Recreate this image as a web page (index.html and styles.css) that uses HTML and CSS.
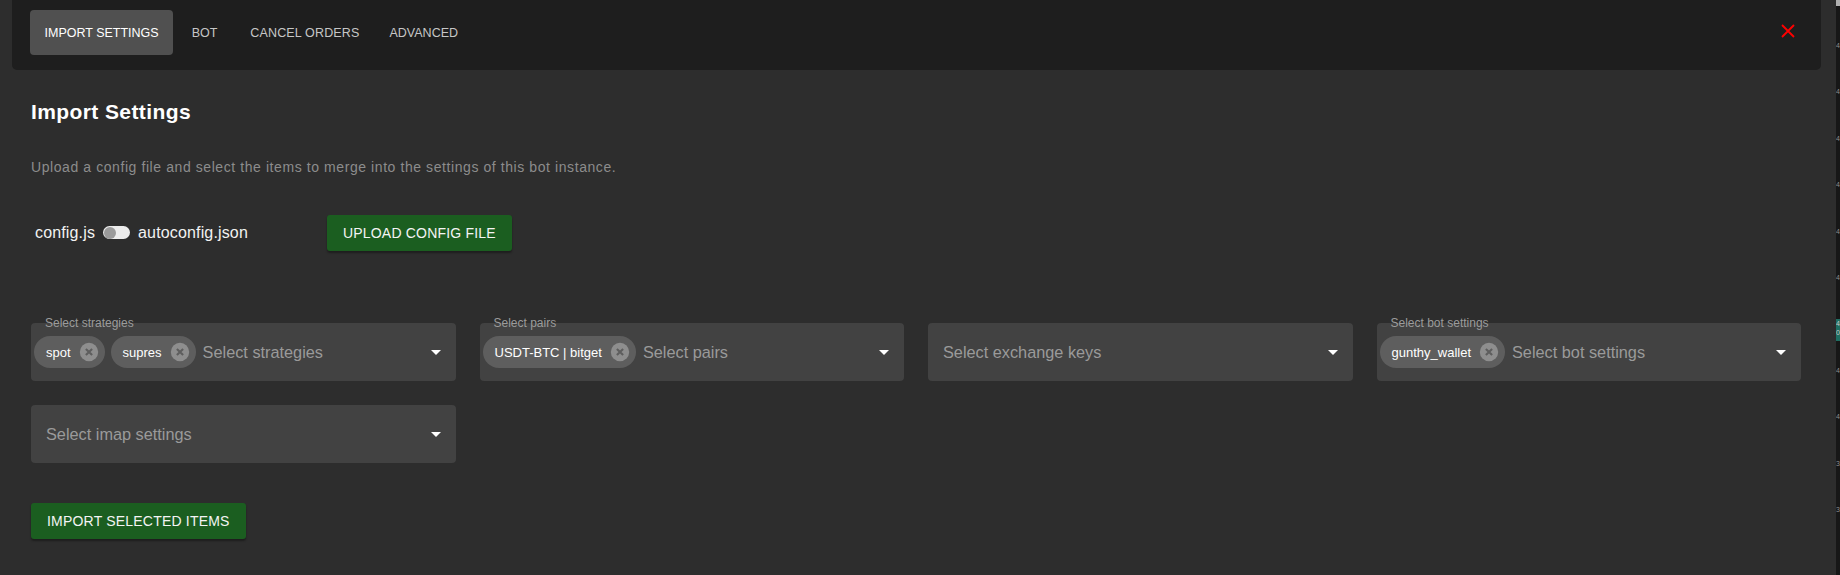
FILE: index.html
```html
<!DOCTYPE html>
<html lang="en">
<head>
<meta charset="utf-8">
<title>Import Settings</title>
<link rel="stylesheet" href="styles.css">
</head>
<body>
<div class="screen">
  <div class="dialog">
    <header class="topbar">
      <nav class="tabs">
        <div class="tab active">IMPORT SETTINGS</div>
        <div class="tab">BOT</div>
        <div class="tab wide">CANCEL ORDERS</div>
        <div class="tab last">ADVANCED</div>
      </nav>
      <button class="close" aria-label="Close">
        <svg width="14" height="14" viewBox="0 0 14 14"><path d="M1 1L13 13M13 1L1 13" stroke="#ff0000" stroke-width="1.8" fill="none"/></svg>
      </button>
    </header>
    <main class="content">
      <h2 class="title">Import Settings</h2>
      <p class="desc">Upload a config file and select the items to merge into the settings of this bot instance.</p>
      <div class="file-row">
        <div class="switch-group">
          <span class="switch-text">config.js</span>
          <span class="switch"><span class="thumb"></span></span>
          <span class="switch-text">autoconfig.json</span>
        </div>
        <button class="btn upload">UPLOAD CONFIG FILE</button>
      </div>
      <div class="selects">
        <div class="field chips">
          <span class="field-label">Select strategies</span>
          <span class="chip">spot<svg class="chip-x" viewBox="0 0 24 24"><circle cx="12" cy="12" r="10"/><path d="M8.6 8.6L15.4 15.4M15.4 8.6L8.6 15.4"/></svg></span>
          <span class="chip">supres<svg class="chip-x" viewBox="0 0 24 24"><circle cx="12" cy="12" r="10"/><path d="M8.6 8.6L15.4 15.4M15.4 8.6L8.6 15.4"/></svg></span>
          <span class="placeholder">Select strategies</span>
          <span class="arrow"></span>
        </div>
        <div class="field chips">
          <span class="field-label">Select pairs</span>
          <span class="chip">USDT-BTC | bitget<svg class="chip-x" viewBox="0 0 24 24"><circle cx="12" cy="12" r="10"/><path d="M8.6 8.6L15.4 15.4M15.4 8.6L8.6 15.4"/></svg></span>
          <span class="placeholder">Select pairs</span>
          <span class="arrow"></span>
        </div>
        <div class="field">
          <span class="placeholder">Select exchange keys</span>
          <span class="arrow"></span>
        </div>
        <div class="field chips">
          <span class="field-label">Select bot settings</span>
          <span class="chip">gunthy_wallet<svg class="chip-x" viewBox="0 0 24 24"><circle cx="12" cy="12" r="10"/><path d="M8.6 8.6L15.4 15.4M15.4 8.6L8.6 15.4"/></svg></span>
          <span class="placeholder">Select bot settings</span>
          <span class="arrow"></span>
        </div>
        <div class="field">
          <span class="placeholder">Select imap settings</span>
          <span class="arrow"></span>
        </div>
      </div>
      <button class="btn import">IMPORT SELECTED ITEMS</button>
    </main>
  </div>
  <div class="edge">
    <div class="edge-top"></div>
    <div class="edge-line">4</div>
    <div class="edge-line">4</div>
    <div class="edge-line">4</div>
    <div class="edge-line">4</div>
    <div class="edge-line">4</div>
    <div class="edge-line">4</div>
    <div class="edge-line teal">4<br>0</div>
    <div class="edge-line">4</div>
    <div class="edge-line">4</div>
    <div class="edge-line">3</div>
    <div class="edge-line">3</div>
  </div>
</div>
</body>
</html>
```

FILE: styles.css
```css
* { box-sizing: border-box; }

html, body {
  margin: 0;
  padding: 0;
  background: #2d2d2d;
  font-family: "Liberation Sans", Arial, sans-serif;
  overflow: hidden;
}

.screen {
  display: flex;
  width: 1840px;
  height: 575px;
}

.dialog {
  flex: 0 0 1836px;
  background: #2d2d2d;
}

/* top bar */
.topbar {
  height: 70px;
  margin: 0 15px 0 12px;
  padding: 10px 26px 0 18px;
  background: #1e1e1e;
  border-radius: 0 0 5px 5px;
  display: flex;
  justify-content: space-between;
  align-items: flex-start;
}

.tabs {
  display: flex;
  gap: 4px;
}

.tab {
  height: 45px;
  padding: 0 14.5px;
  display: flex;
  align-items: center;
  font-size: 12.5px;
  color: #c6c6c6;
  border-radius: 4px;
  white-space: nowrap;
}

.tab.wide {
  letter-spacing: 0.15px;
}

.tab.last {
  margin-left: -3px;
}

.tab.active {
  background: #505050;
  color: #ffffff;
}

.close {
  margin-top: 14px;
  padding: 0;
  border: 0;
  background: none;
  width: 14px;
  height: 14px;
  display: flex;
}

/* content */
.content {
  padding: 0 35px 0 31px;
}

.title {
  margin: 29px 0 0;
  font-size: 21px;
  line-height: 25px;
  font-weight: bold;
  letter-spacing: 0.4px;
  color: #ffffff;
}

.desc {
  margin: 35px 0 0;
  font-size: 14px;
  line-height: 17px;
  letter-spacing: 0.58px;
  color: #8c8c8c;
}

.file-row {
  margin-top: 39px;
  display: flex;
  align-items: center;
  height: 36px;
}

.switch-group {
  display: flex;
  align-items: center;
  gap: 8px;
  padding-left: 4px;
  margin-bottom: 1px;
  font-size: 16px;
  letter-spacing: 0.15px;
  color: #f2f2f2;
}

.switch {
  width: 27px;
  height: 13px;
  border-radius: 7px;
  background: #ececec;
  display: flex;
  align-items: center;
  padding-left: 1px;
}

.thumb {
  width: 12px;
  height: 12px;
  border-radius: 50%;
  background: #9b9b9b;
}

.btn {
  border: 0;
  border-radius: 3px;
  background: #1b5e20;
  color: #f4f4f4;
  font-family: "Liberation Sans", Arial, sans-serif;
  font-size: 14px;
  letter-spacing: 0.2px;
  height: 36px;
  padding: 0 16px;
  box-shadow: 0 2px 2px rgba(0,0,0,0.35);
}

.upload {
  margin-left: 79px;
}

/* selects */
.selects {
  margin-top: 72px;
  width: 1770px;
  display: grid;
  grid-template-columns: repeat(4, 1fr);
  column-gap: 24px;
  row-gap: 24px;
}

.field {
  position: relative;
  height: 58px;
  background: #424242;
  border-radius: 4px;
  display: flex;
  align-items: center;
  gap: 6px;
  padding-left: 14px;
}

.field.chips {
  padding-left: 3px;
}

.field-label {
  position: absolute;
  left: 14px;
  top: -7px;
  font-size: 12px;
  line-height: 14px;
  color: #9c9c9c;
  white-space: nowrap;
}

.chip {
  height: 32px;
  border-radius: 16px;
  background: #5e5e5e;
  color: #ffffff;
  font-size: 13px;
  padding: 0 5px 0 12px;
  display: flex;
  align-items: center;
  white-space: nowrap;
}

.chip-x {
  width: 22px;
  height: 22px;
  margin-left: 7px;
}

.chip-x circle {
  fill: #8e8e8e;
}

.chip-x path {
  stroke: #5e5e5e;
  stroke-width: 2.3;
  fill: none;
}

.placeholder {
  font-size: 16.3px;
  color: #9a9a9a;
  white-space: nowrap;
  padding-left: 1px;
}

.arrow {
  margin-left: auto;
  margin-right: 15px;
  width: 0;
  height: 0;
  border-left: 5px solid transparent;
  border-right: 5px solid transparent;
  border-top: 5px solid #ffffff;
}

.import {
  margin-top: 40px;
}

/* right edge strip */
.edge {
  flex: 0 0 4px;
  background: #171717;
  overflow: hidden;
  font-family: "Liberation Sans", sans-serif;
  font-size: 7px;
  color: #8e8e8e;
}

.edge-top {
  height: 6px;
  background: #b0b0b0;
  margin-bottom: 35px;
}

.edge-line {
  height: 46.4px;
  line-height: 9px;
}

.edge-line.teal {
  background: linear-gradient(#1f6e62, #1f6e62) no-repeat 0 0 / 100% 22px;
  color: #c9c9c9;
}
```
